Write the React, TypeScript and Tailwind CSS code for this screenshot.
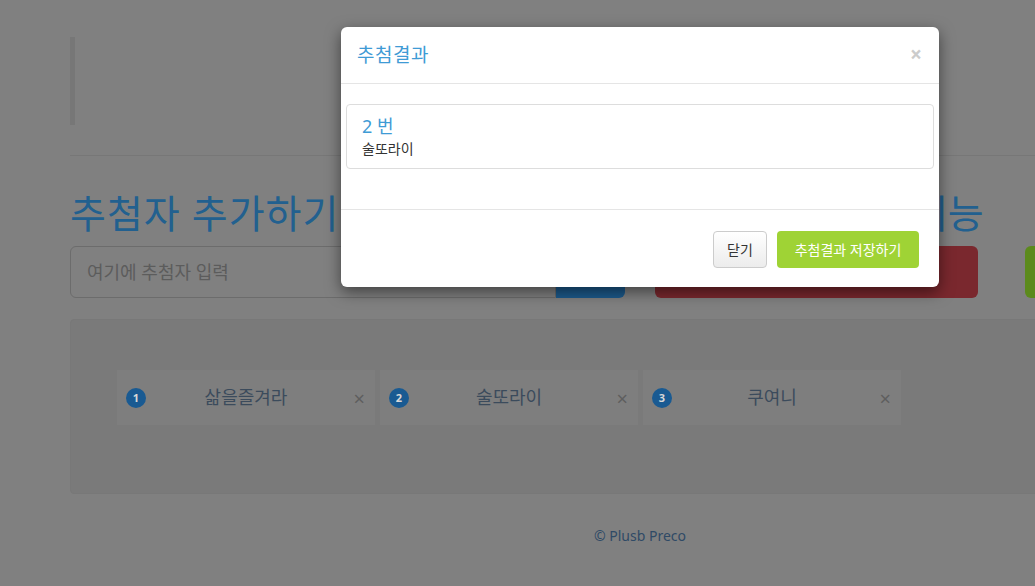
const font = "font-['Noto_Sans','Noto_Sans_CJK_KR',sans-serif]";

const entries = [
  { no: 1, name: "삶을즐겨라" },
  { no: 2, name: "술또라이" },
  { no: 3, name: "쿠여니" },
];

const App = () => {
  return (
    <div className={`relative w-[1035px] h-[586px] overflow-hidden bg-[#808080] ${font}`}>
      {/* dimmed page behind the modal */}
      <div className="ml-[70px] w-[1140px]">
        <div className="mt-[37px] h-[88px] border-l-[5px] border-[#777777]"></div>
        <div className="mt-[30px] border-t border-[#777777]"></div>

        <div className="mt-[37px] flex">
          <div className="w-[555px]">
            <h2 className="text-[39px] leading-[40px] tracking-[1px] text-[#22608f]">추첨자 추가하기</h2>
            <div className="mt-[13px] flex h-[52px]">
              <div className="flex-1 flex items-center px-[16px] rounded-l-[6px] border border-[#6c6c6c] text-[18px] text-[#5c5c5c]">
                여기에 추첨자 입력
              </div>
              <div className="w-[69px] rounded-r-[6px] bg-[#1c5a8c]"></div>
            </div>
          </div>
          <div className="ml-[30px] w-[555px]">
            <h2 className="text-[39px] leading-[40px] tracking-[-0.5px] whitespace-nowrap text-[#22608f]">추첨하기와 부가기능</h2>
            <div className="mt-[13px] flex h-[52px]">
              <div className="w-[323px] rounded-[6px] bg-[#7a282e]"></div>
              <div className="ml-[47px] w-[120px] rounded-[6px] bg-[#5c8a1c]"></div>
            </div>
          </div>
        </div>

        <div className="mt-[21px] h-[175px] rounded-[4px] border border-[#787878] bg-[#7a7a7a] pl-[45px] pt-[49px]">
          <div className="flex gap-[3px]">
            {entries.map((e) => (
              <div
                key={e.no}
                className="relative w-[260px] h-[57px] flex items-center border border-[#7a7a7a] bg-[#7e7e7e]"
              >
                <span className="absolute left-[9px] top-[18px] w-[20px] h-[20px] rounded-full bg-[#195a92] text-[#d8d8d8] text-[11px] font-bold flex items-center justify-center">
                  {e.no}
                </span>
                <span className="flex-1 text-center text-[18px] text-[#3b4b5c]">{e.name}</span>
                <span className="absolute right-[10px] top-[19px] text-[20px] leading-[20px] text-[#5e5e5e]">×</span>
              </div>
            ))}
          </div>
        </div>

        <p className="mt-[32px] text-center text-[14px] leading-[20px] text-[#2f4a66]">© Plusb Preco</p>
      </div>

      {/* modal */}
      <div className="absolute left-[341px] top-[27px] w-[598px] rounded-[6px] bg-white shadow-[0_5px_15px_rgba(0,0,0,0.5)]">
        <div className="h-[57px] flex items-center justify-between px-[16px] border-b border-[#e5e5e5]">
          <h4 className="text-[19px] tracking-[0.5px] text-[#3f9bd5]">추첨결과</h4>
          <span className="mr-[1px] text-[21px] font-bold text-[#cccccc]">×</span>
        </div>
        <div className="px-[5px] pt-[20px] pb-[40px] border-b border-[#e5e5e5]">
          <div className="h-[65px] rounded-[4px] border border-[#dddddd] px-[15px] pt-[8px]">
            <div className="text-[18px] leading-[26px] text-[#3f9bd5]">2 번</div>
            <div className="text-[14px] leading-[20px] text-[#333333]">술또라이</div>
          </div>
        </div>
        <div className="flex justify-end gap-[10px] pt-[21px] pb-[19px] pr-[20px]">
          <button className="w-[54px] h-[37px] rounded-[4px] border border-[#cccccc] bg-gradient-to-b from-white to-[#ececec] text-[14px] text-[#333333]">
            닫기
          </button>
          <button className="w-[142px] h-[37px] rounded-[4px] bg-[#9fd335] text-[14px] text-white">
            추첨결과 저장하기
          </button>
        </div>
      </div>
    </div>
  );
};

export default App;
